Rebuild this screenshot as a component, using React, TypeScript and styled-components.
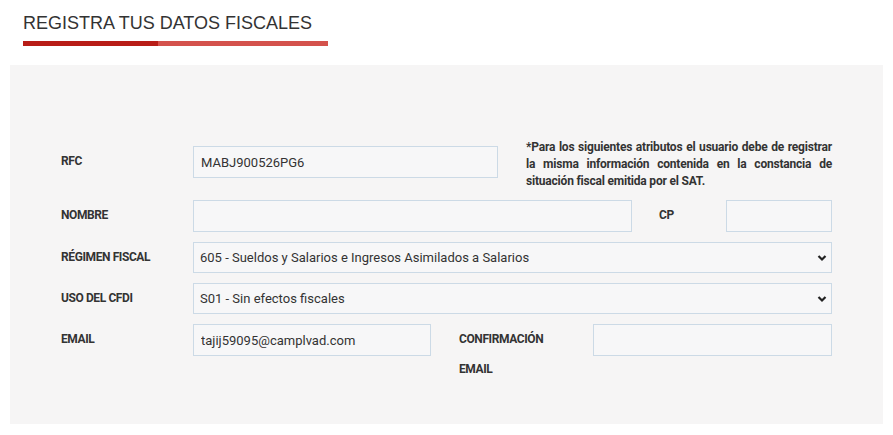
import React from 'react';
import styled, { createGlobalStyle } from 'styled-components';

const GlobalStyle = createGlobalStyle`
  html, body {
    margin: 0;
    padding: 0;
    background: #ffffff;
  }
  body {
    font-family: Roboto, "Liberation Sans", sans-serif;
    color: #333333;
  }
`;

const Page = styled.div`
  width: 893px;
  height: 435px;
  overflow: hidden;
`;

const Header = styled.div`
  padding: 13px 0 0 23px;
`;

const Title = styled.h2`
  margin: 0;
  font-family: "Liberation Sans", Arial, sans-serif;
  font-weight: 400;
  font-size: 18px;
  line-height: 21px;
  color: #333333;
`;

const TitleBar = styled.div`
  display: flex;
  width: 305px;
  height: 5px;
  margin-top: 7px;
`;

const BarPart = styled.div<{ $dark?: boolean }>`
  height: 100%;
  width: ${(p) => (p.$dark ? '135px' : 'auto')};
  flex: ${(p) => (p.$dark ? '0 0 auto' : '1')};
  background: ${(p) => (p.$dark ? '#b81d17' : '#d4524c')};
`;

const Panel = styled.div`
  margin: 19px 10px 0 10px;
  padding: 74px 51px 40px 51px;
  background: #f6f5f5;
  display: flex;
  flex-direction: column;
  gap: 10px;
`;

const Row = styled.div<{ $cols: string }>`
  display: grid;
  grid-template-columns: ${(p) => p.$cols};
  align-items: start;
`;

const Label = styled.label<{ $offset?: number }>`
  display: block;
  margin-top: ${(p) => p.$offset ?? 0}px;
  font-family: Roboto, "Liberation Sans", sans-serif;
  font-weight: 700;
  font-size: 12px;
  letter-spacing: -0.4px;
  line-height: 30px;
  color: #333333;
`;

const Field = styled.input<{ $offset?: number }>`
  box-sizing: border-box;
  width: 100%;
  height: 32px;
  margin: ${(p) => p.$offset ?? 0}px 0 0 0;
  padding: 0 7px;
  border: 1px solid #ccdae6;
  border-radius: 0;
  background: #f7f7f8;
  font-family: Roboto, "Liberation Sans", sans-serif;
  font-size: 13px;
  color: #333333;
  outline: none;
`;

const SelectWrap = styled.div`
  position: relative;
`;

const Select = styled.select`
  box-sizing: border-box;
  width: 100%;
  height: 31px;
  padding: 0 30px 0 6px;
  border: 1px solid #ccdae6;
  border-radius: 0;
  background: #f7f7f8;
  font-family: Roboto, "Liberation Sans", sans-serif;
  font-size: 13px;
  color: #333333;
  appearance: none;
  -webkit-appearance: none;
  outline: none;
`;

const Chevron = styled.svg`
  position: absolute;
  right: 5px;
  top: 50%;
  width: 10px;
  height: 8px;
  margin-top: -4px;
  pointer-events: none;
`;

const Note = styled.div`
  font-family: Roboto, "Liberation Sans", sans-serif;
  font-weight: 700;
  font-size: 12px;
  letter-spacing: -0.2px;
  line-height: 17px;
  color: #333333;
`;

const NoteLine = styled.div<{ $last?: boolean }>`
  text-align: justify;
  text-align-last: ${(p) => (p.$last ? 'left' : 'justify')};
  white-space: nowrap;
`;

const StackLabel = styled(Label)`
  padding-left: 0;
`;

const Gap = styled.div``;

const Dropdown: React.FC<{ value: string }> = ({ value }) => (
  <SelectWrap>
    <Select defaultValue={value}>
      <option value={value}>{value}</option>
    </Select>
    <Chevron viewBox="0 0 10 8">
      <path d="M1.5 2 L5 5.5 L8.5 2" fill="none" stroke="#222" strokeWidth="2.2" />
    </Chevron>
  </SelectWrap>
);

const App: React.FC = () => {
  return (
    <Page>
      <GlobalStyle />
      <Header>
        <Title>REGISTRA TUS DATOS FISCALES</Title>
        <TitleBar>
          <BarPart $dark />
          <BarPart />
        </TitleBar>
      </Header>

      <Panel>
        <Row $cols="132px 305px 28px 306px">
          <Label $offset={7}>RFC</Label>
          <Field $offset={7} defaultValue="MABJ900526PG6" />
          <Gap />
          <Note>
            <NoteLine>*Para los siguientes atributos el usuario debe de registrar</NoteLine>
            <NoteLine>la misma información contenida en la constancia de</NoteLine>
            <NoteLine $last>situación fiscal emitida por el SAT.</NoteLine>
          </Note>
        </Row>

        <Row $cols="132px 439px 27px 67px 106px">
          <Label>NOMBRE</Label>
          <Field defaultValue="" />
          <Gap />
          <Label>CP</Label>
          <Field defaultValue="" />
        </Row>

        <Row $cols="132px 639px">
          <Label>RÉGIMEN FISCAL</Label>
          <Dropdown value="605 - Sueldos y Salarios e Ingresos Asimilados a Salarios" />
        </Row>

        <Row $cols="132px 639px">
          <Label>USO DEL CFDI</Label>
          <Dropdown value="S01 - Sin efectos fiscales" />
        </Row>

        <Row $cols="132px 238px 28px 134px 239px">
          <Label>EMAIL</Label>
          <Field defaultValue="tajij59095@camplvad.com" />
          <Gap />
          <StackLabel>
            CONFIRMACIÓN
            <br />
            EMAIL
          </StackLabel>
          <Field defaultValue="" />
        </Row>
      </Panel>
    </Page>
  );
};

export default App;
